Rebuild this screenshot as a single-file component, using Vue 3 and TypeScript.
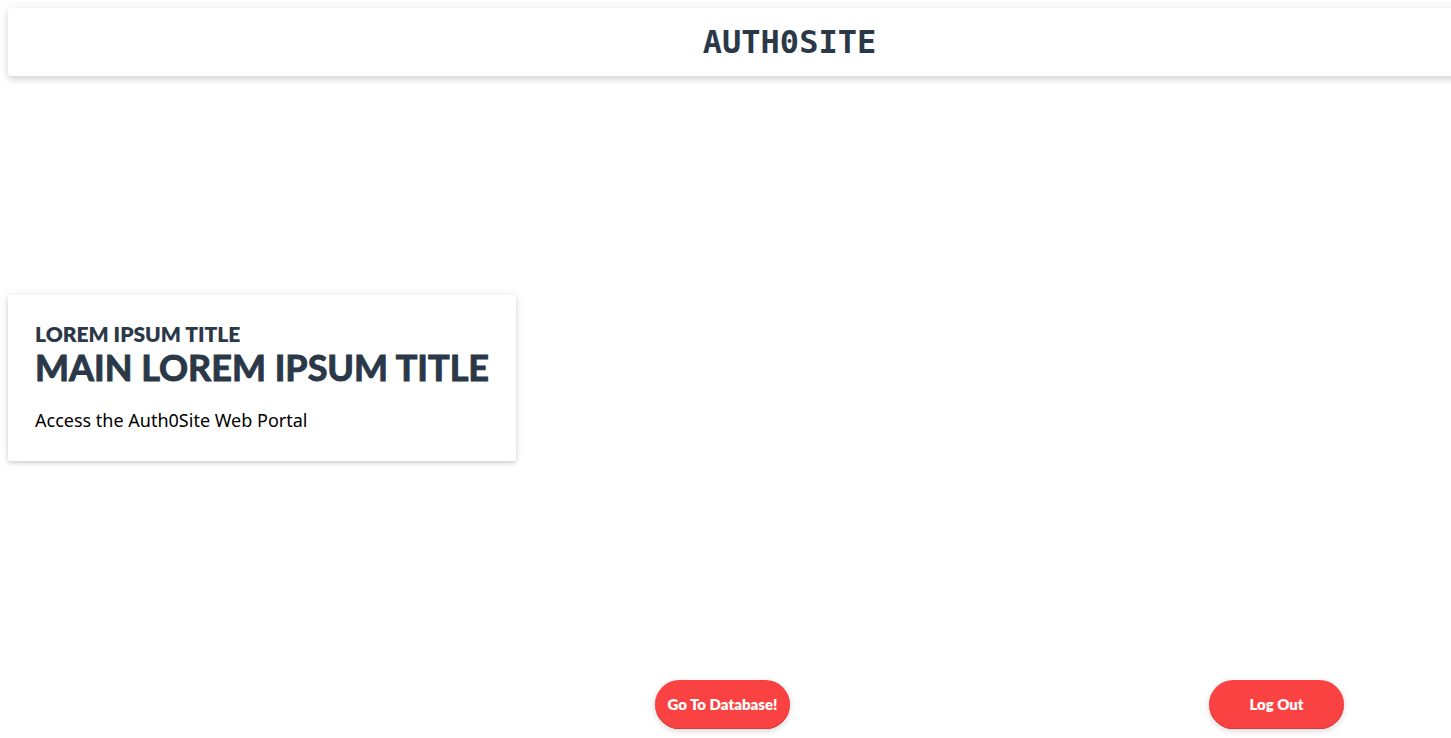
<script setup lang="ts">
interface Action {
  id: string
  label: string
}

const siteName: string = 'AUTH0SITE'
const actions: Action[] = [
  { id: 'database', label: 'Go To Database!' },
  { id: 'logout', label: 'Log Out' },
]
</script>

<template>
  <div class="page">
    <header class="banner">
      <h1 class="brand">{{ siteName }}</h1>
    </header>

    <main class="card">
      <h3 class="subtitle">LOREM IPSUM TITLE</h3>
      <h2 class="title">MAIN LOREM IPSUM TITLE</h2>
      <p class="text">Access the Auth0Site Web Portal</p>
    </main>

    <nav class="actions" aria-label="Account actions">
      <button
        v-for="action in actions"
        :key="action.id"
        type="button"
        class="action"
        :class="action.id"
      >
        {{ action.label }}
      </button>
    </nav>
  </div>
</template>

<style>
body {
  margin: 0;
  background: #fff;
}
</style>

<style scoped>
.page {
  box-sizing: border-box;
  min-height: 100vh;
  padding: 8px 0 9px;
  display: flex;
  flex-direction: column;
  justify-content: space-between;
  overflow: hidden;
}

.banner {
  margin: 0 -120px 0 8px;
  padding: 12px 0;
  border-radius: 4px;
  background: #fff;
  box-shadow: 0 4px 6px rgba(50, 60, 60, 0.15), 0 0 12px rgba(0, 0, 0, 0.07);
}

.brand {
  margin: 0;
  font: 700 32px/44px "DejaVu Sans Mono", monospace;
  color: #2b3848;
  text-align: center;
}

.card {
  box-sizing: border-box;
  width: 35vw;
  min-width: 507px;
  margin-left: 8px;
  padding: 27px 27px 28px;
  border-radius: 2px;
  background: #fff;
  box-shadow: 0 2px 4px rgba(0, 0, 0, 0.16), 0 0 12px rgba(0, 0, 0, 0.07);
}

.subtitle {
  margin: 0;
  font: 800 21px/24px Lato, sans-serif;
  color: #2b3848;
  white-space: nowrap;
}

.title {
  margin: 0;
  font: 700 36px/43px Lato, sans-serif;
  color: #2b3848;
  -webkit-text-stroke: 1px #2b3848;
  white-space: nowrap;
}

.text {
  margin: 18px 0 0;
  font: 400 18px/26px "Noto Sans", sans-serif;
  color: #000;
}

.actions {
  display: grid;
  grid-template-columns: 655fr 135px 419fr 135px 107fr;
}

.action {
  height: 49px;
  padding: 0 0 2px;
  border: 0;
  border-radius: 25px;
  background: #fb4242;
  box-shadow: inset 0 -1px 0 #d83a3c, 0 2px 6px rgba(0, 0, 0, 0.16);
  color: #fff;
  font: 800 15px/20px Lato, sans-serif;
  white-space: nowrap;
  cursor: pointer;
}

.database {
  grid-column: 2;
}

.logout {
  grid-column: 4;
}
</style>
